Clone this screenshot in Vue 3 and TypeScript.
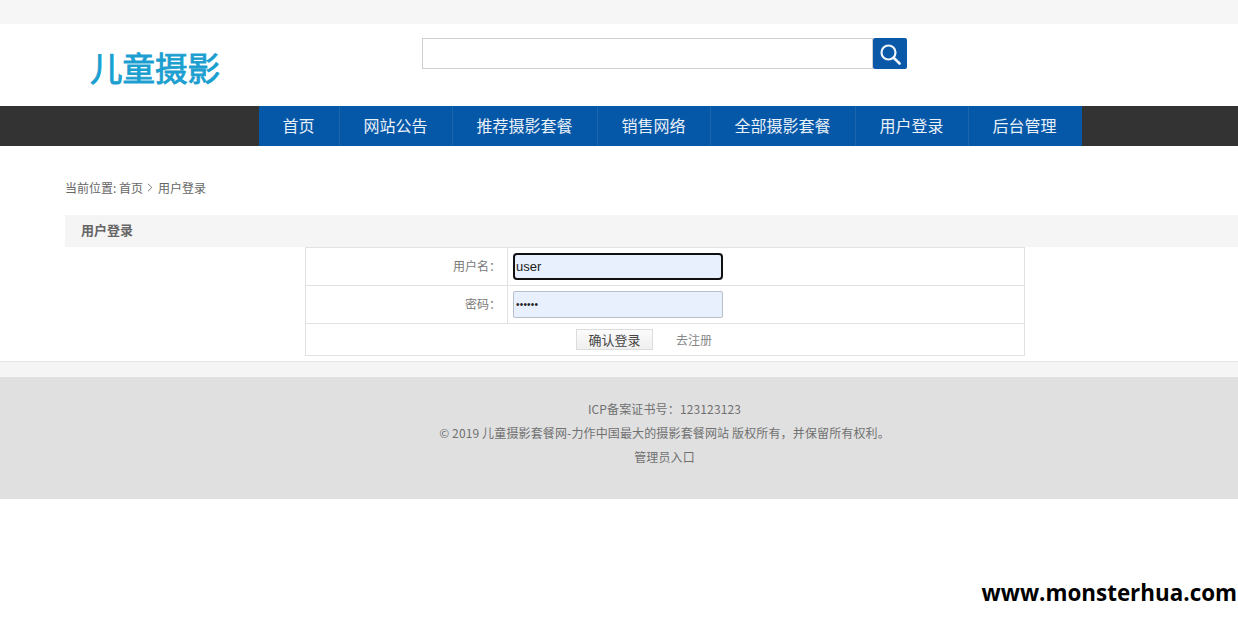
<script setup lang="ts">
const navItems: string[] = ['首页', '网站公告', '推荐摄影套餐', '销售网络', '全部摄影套餐', '用户登录', '后台管理']
</script>

<template>
  <div class="page">
    <div class="topbar"></div>
    <header class="header">
      <div class="logo">儿童摄影</div>
      <form class="search" @submit.prevent>
        <div class="search-input"></div>
        <button class="search-btn" type="button" aria-label="搜索">
          <svg width="24" height="24" viewBox="0 0 24 24" fill="none" stroke="#eef4fa" stroke-linecap="round">
            <circle cx="10.5" cy="10.5" r="7" stroke-width="2.2" />
            <path d="M15.6 15.7 L21.6 21.5" stroke-width="2.6" />
          </svg>
        </button>
      </form>
    </header>
    <nav class="nav">
      <ul class="nav-list">
        <li v-for="item in navItems" :key="item" class="nav-item"><span class="nav-text">{{ item }}</span></li>
      </ul>
    </nav>
    <main class="main">
      <div class="crumb">
        <span>当前位置: 首页</span>
        <svg class="crumb-arrow" width="6" height="9" viewBox="0 0 6 9" fill="none" stroke="#777"><path d="M1 .8 L4.8 4.5 L1 8.2" /></svg>
        <span>用户登录</span>
      </div>
      <h2 class="section-title">用户登录</h2>
      <div class="form-table">
        <div class="row">
          <div class="label">用户名：</div>
          <div class="field"><div class="input focused">user</div></div>
        </div>
        <div class="row">
          <div class="label">密码：</div>
          <div class="field"><div class="input dots">••••••</div></div>
        </div>
        <div class="row actions">
          <button class="submit" type="button">确认登录</button>
          <span class="register">去注册</span>
        </div>
      </div>
    </main>
    <div class="strip"></div>
    <footer class="footer">
      <p>ICP备案证书号：123123123</p>
      <p>© 2019 儿童摄影套餐网-力作中国最大的摄影套餐网站 版权所有，并保留所有权利。</p>
      <p>管理员入口</p>
    </footer>
    <div class="watermark">www.monsterhua.com</div>
  </div>
</template>

<style>
html, body { margin: 0; background: #fff; }
</style>

<style scoped>
.page {
  position: relative;
  height: 623px;
  overflow: hidden;
  background: #fff;
  font-family: "Noto Sans CJK SC", "Liberation Sans", sans-serif;
}
.topbar { height: 24px; background: #f6f6f6; }
.header { height: 82px; display: flex; align-items: flex-start; }
.logo {
  margin: 20px 0 0 90px;
  width: 332px;
  font-size: 32.5px;
  line-height: 46px;
  font-weight: 400;
  -webkit-text-stroke: 0.9px #1c9fd0;
  color: #1c9fd0;
}
.search { display: flex; margin-top: 14px; }
.search-input {
  box-sizing: border-box;
  width: 451px;
  height: 31px;
  border: 1px solid #cfcfcf;
}
.search-btn {
  width: 34px;
  height: 31px;
  padding: 0;
  border: 0;
  border-radius: 2px;
  background: #0a58a8;
  display: flex;
  align-items: center;
  justify-content: center;
}
.nav { height: 40px; background: #333; padding-left: 259px; }
.nav-list { display: flex; width: 823px; height: 40px; margin: 0; padding: 0; list-style: none; background: #0558a8; }
.nav-item {
  height: 40px;
  padding: 0 24.5px 0 23.5px;
  border-right: 1px solid #1c66ae;
  font-size: 16px;
  line-height: 38px;
  color: #e8f0f8;
}
.nav-item:last-child { border-right: 0; }
.main { padding-left: 65px; }
.crumb {
  height: 69px;
  display: flex;
  align-items: center;
  padding-top: 13px;
  box-sizing: border-box;
  font-size: 12px;
  color: #666;
}
.crumb-arrow { margin: 1px 5px 0 4px; }
.section-title {
  margin: 0;
  height: 32px;
  padding-left: 16px;
  background: #f5f5f5;
  font-size: 13px;
  font-weight: 700;
  line-height: 30px;
  color: #666;
}
.form-table {
  box-sizing: border-box;
  width: 720px;
  margin-left: 240px;
  border: 1px solid #e2e2e2;
}
.row { display: flex; height: 38px; border-bottom: 1px solid #e2e2e2; box-sizing: border-box; }
.label {
  box-sizing: border-box;
  width: 202px;
  padding-right: 6px;
  border-right: 1px solid #e2e2e2;
  text-align: right;
  font-size: 12px;
  line-height: 36px;
  color: #777;
}
.field { flex: 1; display: flex; align-items: center; padding-left: 5px; }
.input {
  box-sizing: border-box;
  width: 210px;
  height: 27px;
  padding-left: 2px;
  border: 1px solid #b8bfcc;
  border-radius: 2px;
  background: #e8f0fe;
  font-family: "Liberation Sans", sans-serif;
  font-size: 13px;
  line-height: 25px;
  color: #222;
}
.focused { border: 2px solid #101010; border-radius: 4px; line-height: 23px; padding-left: 1px; }
.dots { font-size: 10px; letter-spacing: 0.2px; }
.actions {
  height: 31px;
  border-bottom: 0;
  align-items: center;
  padding-left: 270px;
}
.submit {
  box-sizing: border-box;
  width: 77px;
  height: 21px;
  padding: 0;
  border: 1px solid #dcdcdc;
  background: linear-gradient(#fbfbfb, #efefef);
  font-family: inherit;
  font-size: 13px;
  line-height: 19px;
  color: #444;
}
.register { margin-left: 23px; font-size: 12px; color: #888; }
.strip {
  height: 15px;
  margin-top: 5px;
  background: #f5f5f5;
  border-top: 1px solid #e4e4e4;
}
.footer {
  height: 122px;
  padding: 20px 0 0 91px;
  box-sizing: border-box;
  background: #e0e0e0;
  text-align: center;
  font-size: 12px;
  letter-spacing: 0.14px;
  color: #707070;
}
.footer p { margin: 0; height: 24px; line-height: 24px; }
.watermark {
  position: absolute;
  right: 1px;
  top: 578px;
  font-family: "Open Sans", sans-serif;
  font-size: 22.4px;
  line-height: 30px;
  font-weight: 700;
  color: #000;
}
</style>
